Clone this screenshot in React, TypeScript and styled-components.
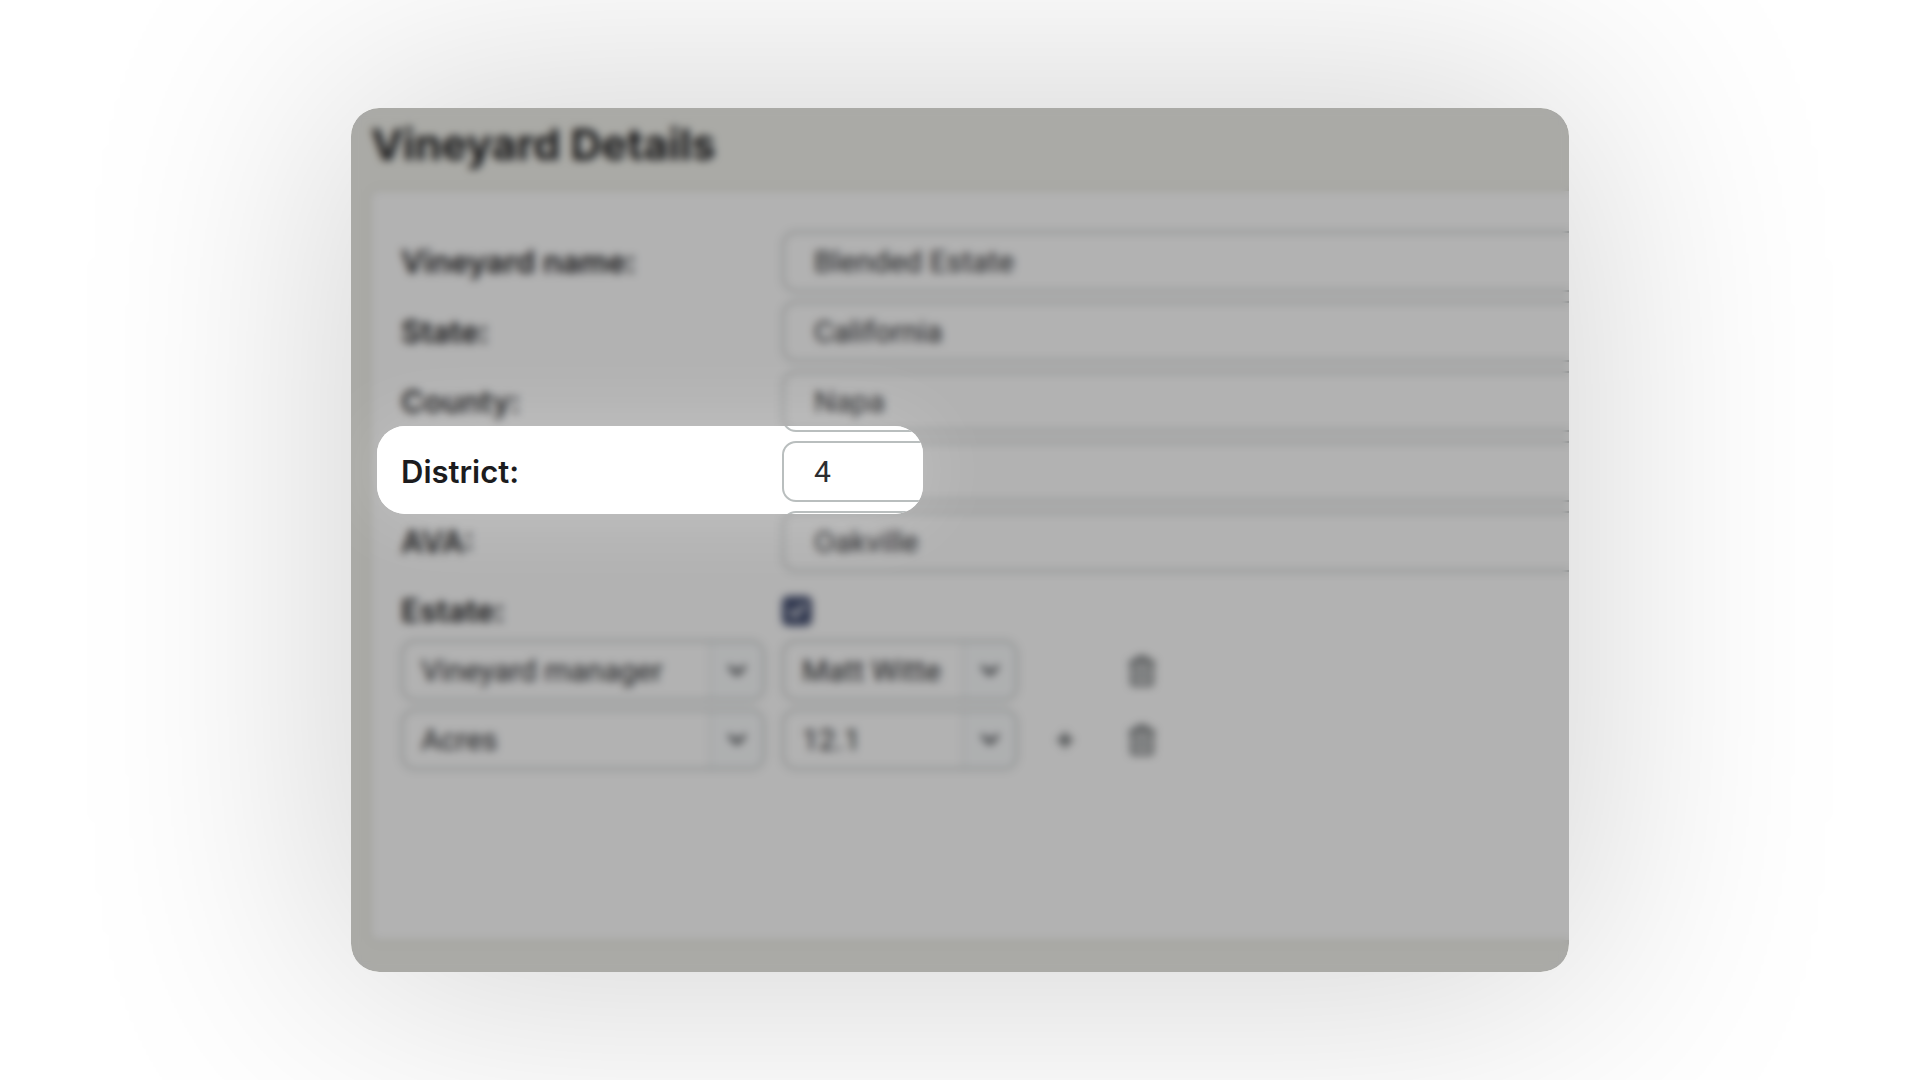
import React from "react";
import styled, { createGlobalStyle } from "styled-components";
import { FaPlus, FaRegTrashAlt } from "react-icons/fa";

const GlobalStyle = createGlobalStyle`
  *, *::before, *::after { box-sizing: border-box; }
  body { margin: 0; background: #ffffff; font-family: Roboto, "Liberation Sans", sans-serif; }
`;

const Stage = styled.main`
  display: flex;
  min-height: 100vh;
  padding: 108px 351px;
  overflow: hidden;
`;

const Card = styled.section`
  position: relative;
  flex: 1;
  min-width: 0;
  display: flex;
  flex-direction: column;
  padding: 0 0 32px 20px;
  border-radius: 28px;
  overflow: hidden;
  background: #f4f4ee;
  box-shadow: 0 0 280px 16px rgba(0, 0, 0, 0.18);
`;

const Title = styled.h1`
  margin: 0;
  height: 83px;
  padding-bottom: 12px;
  display: flex;
  align-items: center;
  font-family: Inter, "Liberation Sans", sans-serif;
  font-size: 43px;
  line-height: 54px;
  font-weight: 700;
  color: #1c1c1e;
`;

const Panel = styled.form`
  flex: 1;
  margin-right: -48px;
  padding: 40px 0 40px 30px;
  background: #ffffff;
  border-radius: 8px;
  box-shadow: 0 0 6px rgba(60, 60, 40, 0.2);
`;

const Fields = styled.div`
  display: grid;
  gap: 9px;
`;

const FieldRow = styled.div<{ $height?: number }>`
  display: grid;
  grid-template-columns: 364px minmax(0, 1fr);
  column-gap: 17px;
  align-items: center;
  height: ${(p) => p.$height ?? 61}px;
`;

const Label = styled.label`
  font-family: Inter, "Liberation Sans", sans-serif;
  font-size: 31px;
  line-height: 36px;
  font-weight: 600;
  color: #1c1c1e;
`;

const TextInput = styled.input`
  width: 100%;
  height: 61px;
  padding: 0 30px;
  border: 2px solid #b9bebe;
  border-radius: 14px;
  background: #ffffff;
  font-family: inherit;
  font-size: 30px;
  color: #2c2d30;
  outline: none;
`;

const CheckBox = styled.input`
  appearance: none;
  width: 30px;
  height: 30px;
  margin: 0;
  border-radius: 6px;
  background: #4a5475;
  display: grid;
  place-items: center;
  &:checked::after {
    content: "";
    width: 9px;
    height: 17px;
    margin-bottom: 4px;
    border: solid #ffffff;
    border-width: 0 3px 3px 0;
    transform: rotate(42deg);
  }
`;

const Attributes = styled.div`
  display: grid;
  gap: 8px;
`;

const AttributeRow = styled.div`
  display: grid;
  grid-template-columns: 364px 236px 60px 60px;
  column-gap: 17px;
  align-items: center;
`;

const SelectBox = styled.div`
  display: grid;
  grid-template-columns: minmax(0, 1fr) 54px;
  height: 61px;
  border: 2px solid #b9bebe;
  border-radius: 14px;
  overflow: hidden;
  background: #ffffff;
`;

const Select = styled.select`
  grid-area: 1 / 1 / 2 / 3;
  appearance: none;
  min-width: 0;
  padding: 0 18px;
  border: 0;
  background: transparent;
  font-family: inherit;
  font-size: 30px;
  color: #2c2d30;
  outline: none;
`;

const Caret = styled.span`
  grid-area: 1 / 2;
  display: grid;
  place-items: center;
  pointer-events: none;
  border-left: 2px solid #e4e8e9;
  background: #fafcfd;
  color: #54575b;
`;

const IconButton = styled.button<{ $column: number }>`
  grid-column: ${(p) => p.$column};
  display: grid;
  place-items: center;
  height: 48px;
  padding: 0;
  border: 0;
  background: transparent;
  color: #4d5254;
`;

/* Dims and blurs the whole card except for a rounded window over one row. */
const Veil = styled.div`
  position: absolute;
  inset: 0;
  pointer-events: none;
  background: rgba(0, 0, 0, 0.3);
  backdrop-filter: blur(4px);
  mask-image: url("data:image/svg+xml,%3Csvg xmlns='http://www.w3.org/2000/svg' width='546' height='88'%3E%3Crect width='546' height='88' rx='28'/%3E%3C/svg%3E"),
    linear-gradient(#000000, #000000);
  mask-position: 26px 318px, 0 0;
  mask-size: 546px 88px, 100% 100%;
  mask-repeat: no-repeat;
  mask-composite: exclude;
`;

const Glow = styled.div`
  position: absolute;
  left: 26px;
  top: 318px;
  width: 546px;
  height: 88px;
  border-radius: 28px;
  pointer-events: none;
  box-shadow: 0 0 80px rgba(255, 255, 255, 0.24);
`;

const textFields = [
  { id: "name", label: "Vineyard name:", value: "Blended Estate" },
  { id: "state", label: "State:", value: "California" },
  { id: "county", label: "County:", value: "Napa" },
  { id: "district", label: "District:", value: "4" },
  { id: "ava", label: "AVA:", value: "Oakville" },
];

const attributes = [
  { key: "Vineyard manager", value: "Matt Witte", canAdd: false },
  { key: "Acres", value: "12.1", canAdd: true },
];

function Dropdown({ label, value }: { label: string; value: string }) {
  return (
    <SelectBox>
      <Select aria-label={label} defaultValue={value}>
        <option>{value}</option>
      </Select>
      <Caret aria-hidden="true">
        <svg width="20" height="14" viewBox="0 0 20 14" fill="none">
          <path d="M3 3l7 7 7-7" stroke="currentColor" strokeWidth="4" strokeLinecap="round" strokeLinejoin="round" />
        </svg>
      </Caret>
    </SelectBox>
  );
}

export default function App() {
  return (
    <>
      <GlobalStyle />
      <Stage>
        <Card>
          <Title>Vineyard Details</Title>
          <Panel onSubmit={(e) => e.preventDefault()}>
            <Fields>
              {textFields.map((f) => (
                <FieldRow key={f.id}>
                  <Label htmlFor={f.id}>{f.label}</Label>
                  <TextInput id={f.id} defaultValue={f.value} />
                </FieldRow>
              ))}
              <FieldRow $height={59}>
                <Label htmlFor="estate">Estate:</Label>
                <CheckBox id="estate" type="checkbox" defaultChecked />
              </FieldRow>
            </Fields>
            <Attributes>
              {attributes.map((a) => (
                <AttributeRow key={a.key}>
                  <Dropdown label="Attribute" value={a.key} />
                  <Dropdown label={a.key} value={a.value} />
                  {a.canAdd && (
                    <IconButton type="button" $column={3} aria-label="Add attribute">
                      <FaPlus size={18} />
                    </IconButton>
                  )}
                  <IconButton type="button" $column={4} aria-label={`Delete ${a.key}`}>
                    <FaRegTrashAlt size={30} />
                  </IconButton>
                </AttributeRow>
              ))}
            </Attributes>
          </Panel>
          <Veil />
          <Glow />
        </Card>
      </Stage>
    </>
  );
}
